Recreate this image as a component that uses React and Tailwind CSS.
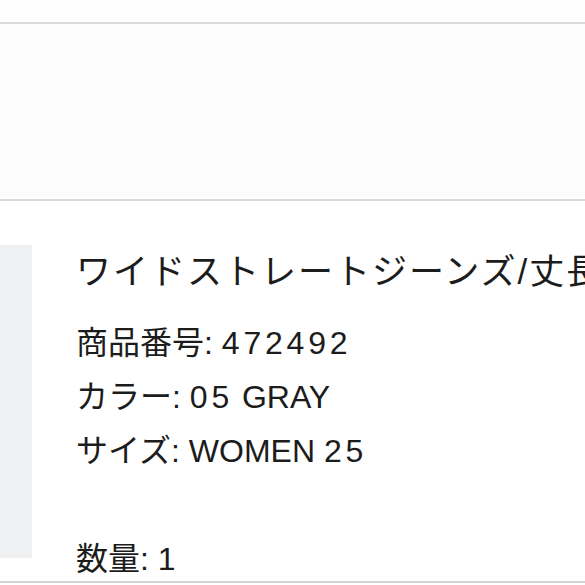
export default function App() {
    const num = (v) => <span className="tracking-[3.8px]">{v}</span>;

    return (
        <div className="w-[585px] h-[585px] overflow-hidden bg-white text-[#1c1c1c] font-['Liberation_Sans','Noto_Sans_CJK_JP',sans-serif]">
            {/* top strip */}
            <div className="h-[22px] bg-[#fefefe]" />

            {/* empty panel */}
            <div className="h-[179px] bg-[#fdfdfd] border-y-2 border-[#dadada]" />

            {/* order item */}
            <div className="h-[382px] flex border-b-2 border-[#d4d4d4]">
                <div className="pt-[44px] shrink-0">
                    <div className="w-[32px] h-[313px] bg-[#eef0f2]" />
                </div>
                <div className="pt-[44px] pl-[44px] whitespace-nowrap">
                    <div className="text-[35px] leading-[54px] tracking-[2px]">ワイドストレートジーンズ/丈長め</div>
                    <div className="mt-[17px] text-[32px] leading-[54px]">
                        <div>商品番号: {num("472492")}</div>
                        <div>カラー: {num("05")} GRAY</div>
                        <div>サイズ: WOMEN {num("25")}</div>
                        <div className="h-[54px]" />
                        <div>数量: 1</div>
                    </div>
                </div>
            </div>
        </div>
    );
}
